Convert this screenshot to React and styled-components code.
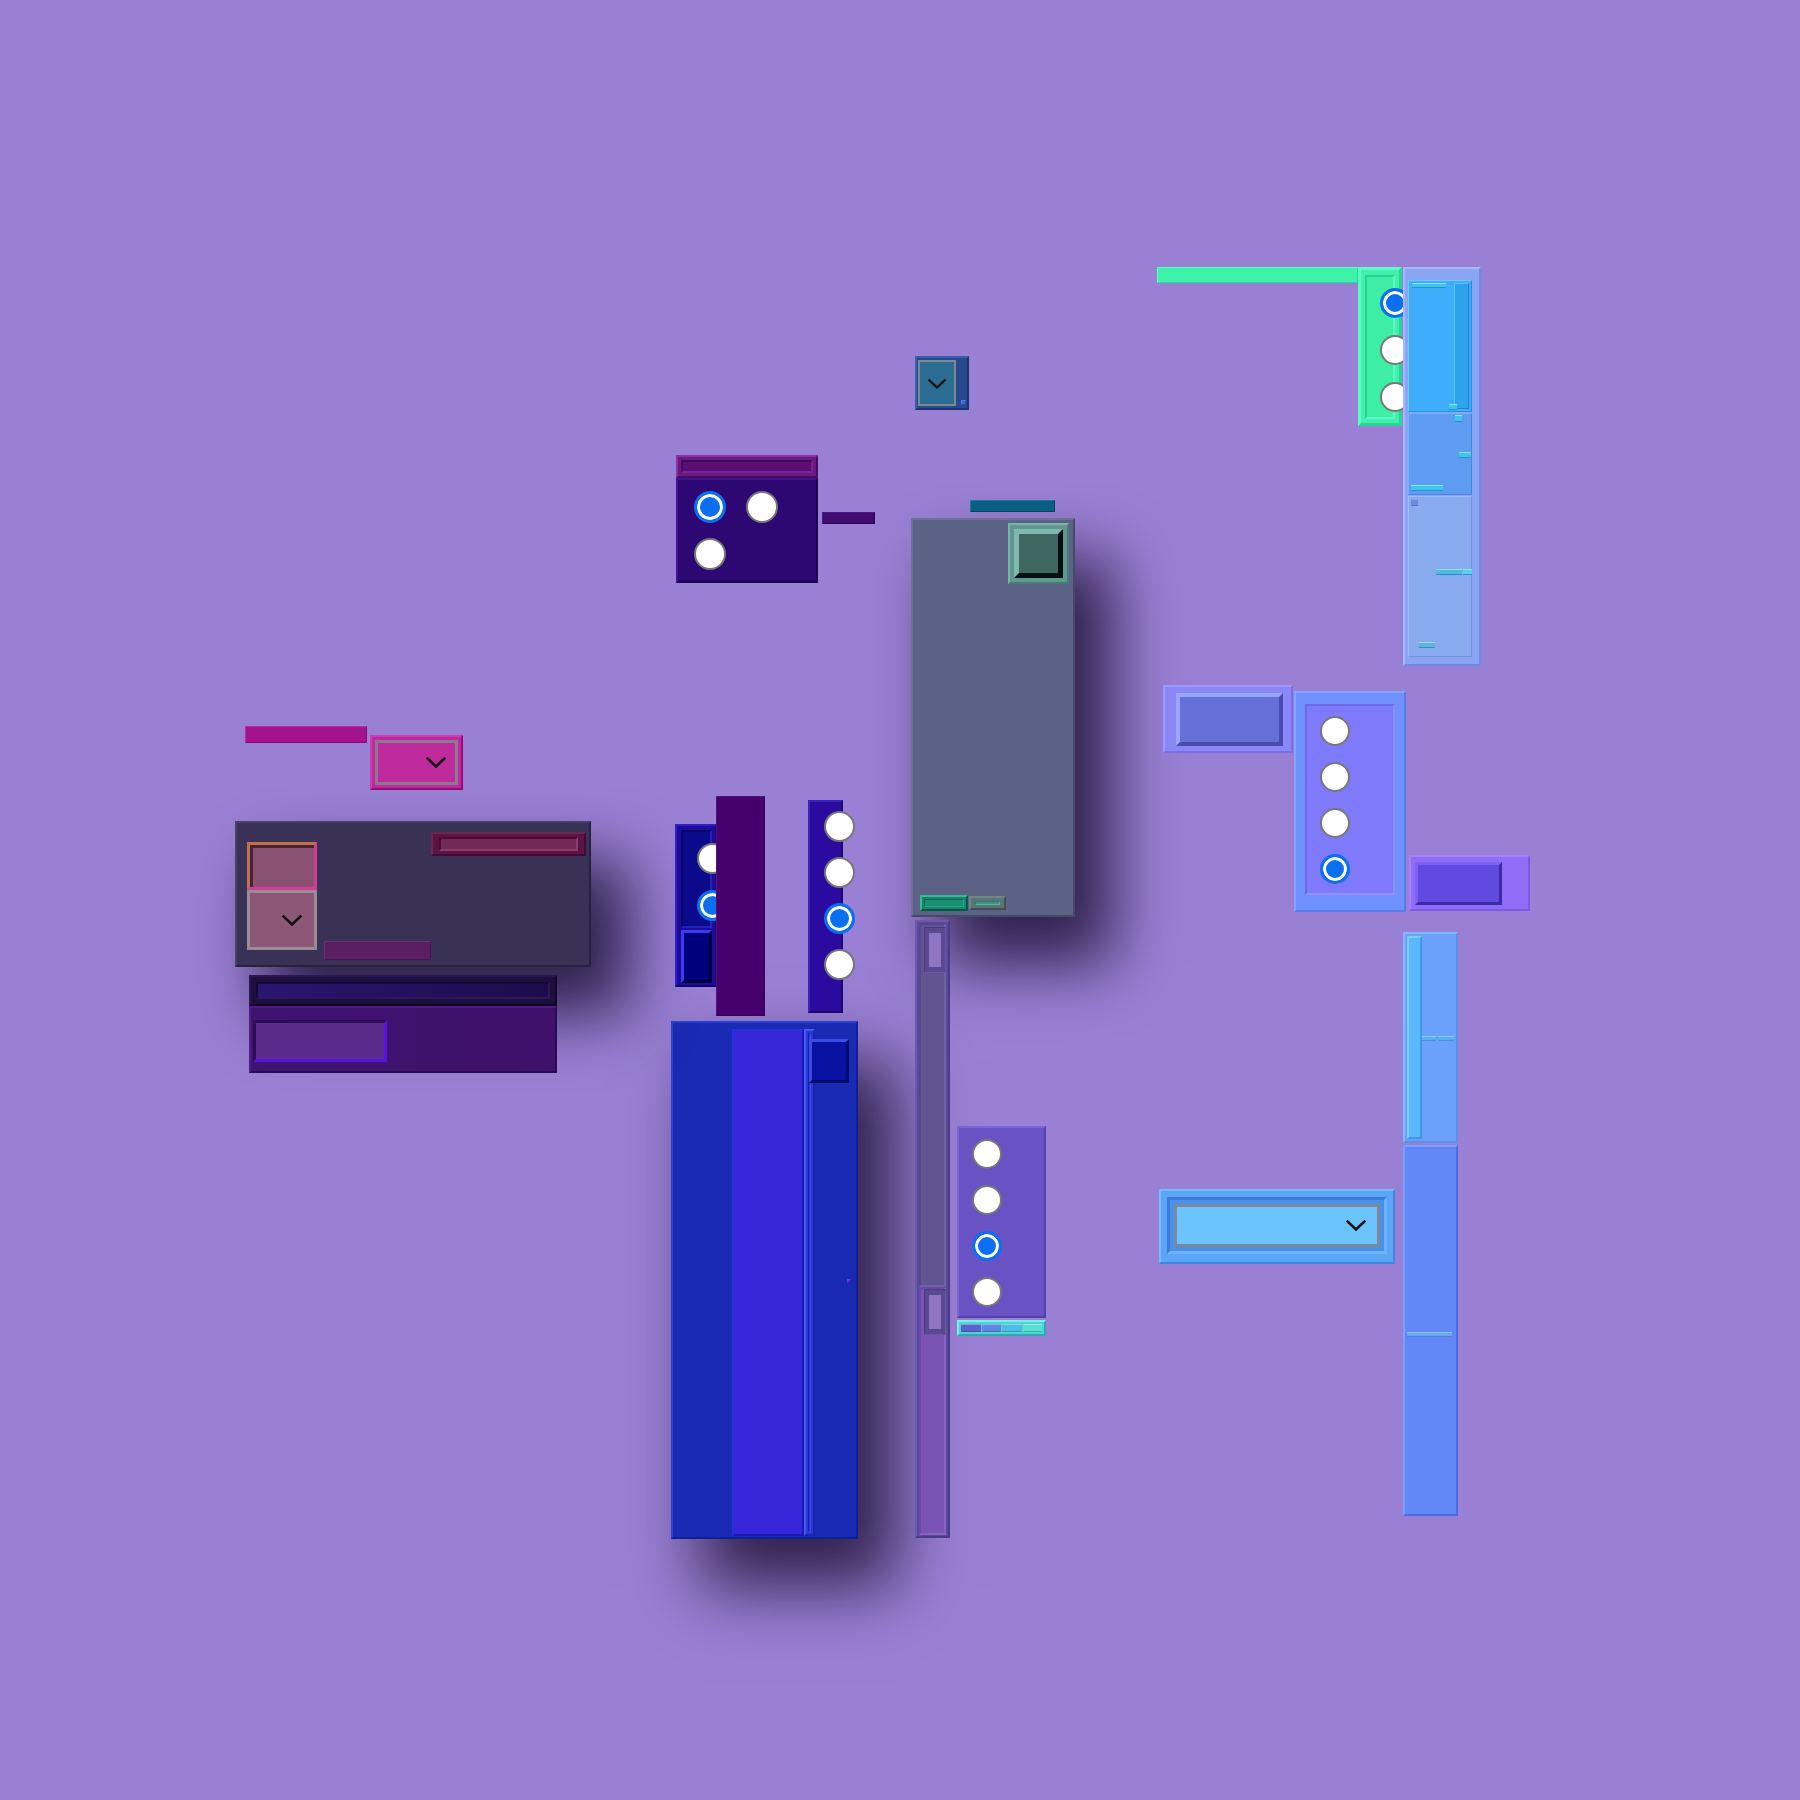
import React from "react";
import styled, { createGlobalStyle, css } from "styled-components";

const GlobalStyle = createGlobalStyle`
  html, body {
    margin: 0;
    padding: 0;
    background: #9a80d4;
  }
  body {
    font-family: "Liberation Sans", Arial, sans-serif;
  }
  * {
    box-sizing: border-box;
  }
`;

const bevel = css`
  border: ${(p) => p.$b ?? 2}px solid;
  border-color: ${(p) => `${p.$hi} ${p.$lo} ${p.$lo} ${p.$hi}`};
`;

const flow = css`
  display: flex;
  flex-direction: ${(p) => p.$dir || "row"};
  padding: ${(p) => p.$pad || 0};
  gap: ${(p) => p.$gap || 0}px;
  justify-content: ${(p) => p.$justify || "flex-start"};
  align-items: ${(p) => p.$align || "stretch"};
`;

const Canvas = styled.div`
  position: relative;
  width: 1800px;
  height: 1800px;
  overflow: hidden;
  background: #9a80d4;
`;

/* widgets sit on the canvas at their own coordinates */
const Bar = styled.div`
  position: absolute;
  left: ${(p) => p.$x}px;
  top: ${(p) => p.$y}px;
  width: ${(p) => p.$w}px;
  height: ${(p) => p.$h}px;
  background: ${(p) => p.$bg};
  ${bevel}
`;

const Panel = styled.div`
  position: absolute;
  left: ${(p) => p.$x}px;
  top: ${(p) => p.$y}px;
  width: ${(p) => p.$w}px;
  height: ${(p) => p.$h}px;
  background: ${(p) => p.$bg || "transparent"};
  ${(p) => (p.$hi ? bevel : "")}
  ${flow}
  box-shadow: ${(p) =>
    p.$shadow ? "34px 44px 64px 4px rgba(24, 12, 46, 0.82)" : "none"};
`;

const Inset = styled.div`
  position: relative;
  ${(p) => (p.$w ? `width: ${p.$w}px; flex-shrink: 0;` : "")}
  ${(p) => (p.$h ? `height: ${p.$h}px; flex-shrink: 0;` : "")}
  ${(p) => (p.$grow ? "flex: 1;" : "")}
  background: ${(p) => p.$bg};
  ${(p) => (p.$hi ? bevel : "")}
  ${flow}
  ${(p) => (p.$sunk ? `box-shadow: inset 3px 3px 0 ${p.$sunk};` : "")}
`;

const Tick = styled.span`
  position: absolute;
  left: ${(p) => p.$x}px;
  top: ${(p) => p.$y}px;
  width: ${(p) => p.$w}px;
  height: ${(p) => p.$h || 5}px;
  background: ${(p) => p.$bg || "#3fc4ea"};
  border-top: 1px solid ${(p) => p.$hi || "#86e8ff"};
  border-bottom: 1px solid ${(p) => p.$lo || "#2494c8"};
`;

const Knob = styled.span`
  position: absolute;
  left: ${(p) => p.$x}px;
  top: ${(p) => p.$y}px;
  width: ${(p) => p.$w}px;
  height: ${(p) => p.$h}px;
  background: ${(p) => p.$bg};
  ${bevel}
`;

const SelectBox = styled.div`
  ${(p) => (p.$grow ? "flex: 1;" : "")}
  ${(p) => (p.$w ? `width: ${p.$w}px; flex-shrink: 0;` : "")}
  ${(p) => (p.$h ? `height: ${p.$h}px; flex-shrink: 0;` : "")}
  display: flex;
  align-items: center;
  justify-content: ${(p) => p.$justify || "flex-end"};
  padding-right: ${(p) => p.$padR ?? 0}px;
  padding-left: ${(p) => p.$padL ?? 0}px;
  background: ${(p) => p.$bg};
  border: ${(p) => p.$b ?? 2}px solid ${(p) => p.$edge || "#7d7d86"};
`;

const RadioGroup = styled.div`
  position: ${(p) => (p.$abs ? "absolute" : "static")};
  left: ${(p) => p.$x ?? 0}px;
  top: ${(p) => p.$y ?? 0}px;
  display: ${(p) => (p.$cols ? "grid" : "flex")};
  flex-direction: column;
  grid-template-columns: ${(p) => (p.$cols ? `repeat(${p.$cols}, max-content)` : "none")};
  row-gap: ${(p) => p.$gap}px;
  column-gap: ${(p) => p.$colGap ?? 0}px;
  padding: ${(p) => p.$pad || 0};
`;

const Radio = styled.span`
  display: block;
  width: ${(p) => p.$size || 30}px;
  height: ${(p) => p.$size || 30}px;
  border-radius: 50%;
  flex-shrink: 0;
  ${(p) =>
    p.$on
      ? css`
          background: #0b6ff2;
          border: 3px solid #0b6ff2;
          box-shadow: inset 0 0 0 3px #ffffff;
        `
      : css`
          background: #ffffff;
          border: 2px solid #777777;
        `}
`;

const Segment = styled.span`
  flex: 1;
  background: ${(p) => p.$bg};
  border-top: 1px solid rgba(255, 255, 255, 0.35);
  border-bottom: 1px solid rgba(0, 0, 0, 0.2);
`;

function Chevron({ w = 22 }) {
  return (
    <svg width={w} height={w * 0.55} viewBox="0 0 20 11" fill="none">
      <path d="M1.5 1.5 L10 9.5 L18.5 1.5" stroke="#111" strokeWidth="2.4" />
    </svg>
  );
}

function Radios({ count, on, size, ...rest }) {
  return (
    <RadioGroup {...rest}>
      {Array.from({ length: count }, (_, i) => (
        <Radio key={i} $on={i === on} $size={size} />
      ))}
    </RadioGroup>
  );
}

export default function App() {
  return (
    <>
      <GlobalStyle />
      <Canvas>
        {/* shadowed cards first so their shadows fall behind the rest */}
        <Panel $x={911} $y={518} $w={164} $h={399} $bg="#5c6285" $hi="#6b7198" $lo="#454a68" $shadow
          $dir="column" $justify="space-between" $pad="3px 4px 4px 7px">
          <Inset $bg="transparent" $justify="flex-end">
            <Inset $w={61} $h={61} $bg="#5e9890" $hi="#7db3ab" $lo="#4a7c75" $pad="4px">
              <Inset $grow $bg="#3f6761" $hi="#80b7af" $lo="#050f0e" $b={5} />
            </Inset>
          </Inset>
          <Inset $bg="transparent" $gap={1} $align="center">
            <Inset $w={48} $h={16} $bg="#17876c" $hi="#38b898" $lo="#0a5644" $b={2} $pad="2px">
              <Inset $grow $bg="#1a8e72" $hi="#0d6450" $lo="#2aa888" $b={1} />
            </Inset>
            <Inset $w={37} $h={14} $bg="#5c7474" $hi="#6e8888" $lo="#444c56" $b={2} $pad="3px 4px">
              <Inset $grow $bg="#3e9888" $hi="#2a7a6c" $lo="#5ab0a0" $b={1} />
            </Inset>
          </Inset>
        </Panel>

        <Panel $x={671} $y={1021} $w={187} $h={518} $bg="#1a2bb3" $hi="#2a40d2" $lo="#0f1e9a" $shadow
          $pad="6px 0 1px 59px">
          <Inset $w={72} $bg="#3626d8" $hi="#2232e0" $lo="#1a1ab4" $b={2} />
          <Inset $w={11} $bg="#2838d4" $hi="#4658f2" $lo="#1a22b0" $b={2} $pad="2px">
            <Inset $grow $bg="#2434d0" $hi="#1a20a8" $lo="#3c4cec" $b={1} />
          </Inset>
          <Knob $x={136} $y={16} $w={40} $h={44} $bg="#0a12a2" $hi="#3a4be6" $lo="#000a6a" $b={3} />
          <Knob $x={174} $y={256} $w={4} $h={4} $bg="#5a2af0" $hi="#6a3aff" $lo="#3a1ab0" $b={1} />
        </Panel>

        <Panel $x={235} $y={821} $w={356} $h={146} $bg="#3a3156" $hi="#4a4068" $lo="#27213c" $shadow
          $pad="9px 3px 5px 10px">
          <Inset $bg="transparent" $dir="column" $w={70} style={{ marginTop: 10 }}>
            <Inset $h={48} $bg="#8a5172" $hi="#c0704e" $lo="#d43c98" $b={3} $sunk="#472435" />
            <SelectBox $h={60} $bg="#8d5778" $edge="#9a8c94" $b={3} $padR={11}>
              <Chevron />
            </SelectBox>
          </Inset>
          <Inset $bg="transparent" $align="flex-end" style={{ marginLeft: 7 }}>
            <Inset $w={107} $h={19} $bg="#5a1f62" $hi="#6c3276" $lo="#4a1452" $b={1} />
          </Inset>
          <Inset $bg="transparent" $align="flex-start">
            <Inset $w={155} $h={24} $bg="#5c1444" $hi="#6e2456" $lo="#420a30" $b={2} $pad="3px 6px">
              <Inset $grow $bg="#74285a" $hi="#4a0c36" $lo="#8c3c70" $b={2} />
            </Inset>
          </Inset>
        </Panel>

        {/* title bar and body under the dark card */}
        <Panel $x={249} $y={975} $w={308} $h={98} $dir="column">
          <Inset $h={31} $bg="#1d0e3e" $hi="#2a1654" $lo="#100628" $b={2} $pad="5px">
            <Inset $grow $bg="linear-gradient(90deg, #2a1672, #1c0c4a)" $hi="#150838" $lo="#2a1a5a" $b={2} />
          </Inset>
          <Inset $grow $bg="linear-gradient(90deg, #3e1470, #3f106c)" $hi="#4c1e84" $lo="#2a0a52" $b={2}
            $pad="12px 2px 9px 2px" $align="flex-start">
            <Inset $w={134} $h={42} $bg="#5b2b8c" $hi="#2a0e52" $lo="#5a12e0" $b={3} />
          </Inset>
        </Panel>

        {/* magenta strip and dropdown */}
        <Bar $x={245} $y={726} $w={122} $h={17} $bg="#a5128f" $hi="#b82ca2" $lo="#860a72" $b={1} />
        <Panel $x={370} $y={735} $w={93} $h={55} $bg="#c1289d" $hi="#cf3cb0" $lo="#940b7a" $pad="3px">
          <SelectBox $grow $bg="#bf2a9c" $edge="#8a7a8e" $b={3} $padR={8}>
            <Chevron />
          </SelectBox>
        </Panel>

        {/* purple radio card */}
        <Panel $x={676} $y={455} $w={142} $h={127} $dir="column">
          <Inset $h={23} $bg="#6a1a82" $hi="#8a30a2" $lo="#4a0a62" $b={2} $pad="3px">
            <Inset $grow $bg="#5a0e74" $hi="#400a5a" $lo="#7a2494" $b={2} />
          </Inset>
          <Inset $grow $bg="#2e0872" $hi="#3c1690" $lo="#1c0450" $b={2} $pad="11px 16px">
            <Radios count={3} on={0} size={32} $cols={2} $gap={15} $colGap={20} />
          </Inset>
        </Panel>
        <Bar $x={822} $y={512} $w={53} $h={12} $bg="#3f0b70" $hi="#4a1680" $lo="#2a0450" $b={1} />
        <Bar $x={970} $y={500} $w={85} $h={12} $bg="#0a5e84" $hi="#177aa2" $lo="#05425e" $b={1} />

        {/* small dropdown */}
        <Panel $x={915} $y={356} $w={54} $h={54} $bg="#284990" $hi="#3a60ac" $lo="#1c346e" $pad="2px 0 2px 1px">
          <SelectBox $w={38} $bg="#2b6d92" $edge="#7b8a8c" $b={2} $justify="center">
            <Chevron w={20} />
          </SelectBox>
          <Knob $x={44} $y={42} $w={5} $h={5} $bg="#3a6ad8" $hi="#4a7ae8" $lo="#2a4ab0" $b={1} />
        </Panel>

        {/* blue radio column behind the purple bar */}
        <Panel $x={675} $y={824} $w={42} $h={163} $bg="#1e0a9e" $hi="#2c22c2" $lo="#0e0466" $dir="column"
          $pad="4px 3px 2px 4px" $gap={2}>
          <Inset $h={98} $bg="#0c0a8c" $hi="#08085e" $lo="#2420b8" $b={2}>
            <Radios count={2} on={1} size={31} $gap={16} $pad="11px 0 0 14px" />
          </Inset>
          <Inset $grow $bg="#00007c" $hi="#3c3cf2" $lo="#00003a" $b={3} />
        </Panel>
        <Bar $x={716} $y={796} $w={49} $h={220} $bg="#46006e" $hi="#55107e" $lo="#38005a" $b={1} />

        <Panel $x={808} $y={800} $w={35} $h={213} $bg="#2b0aa0" $hi="#3a22ba" $lo="#1a066c" $pad="9px 0 0 14px">
          <Radios count={4} on={2} size={31} $gap={15} />
        </Panel>

        {/* stacked slider bar */}
        <Panel $x={915} $y={920} $w={35} $h={618} $bg="#5a4a9c" $hi="#6a5aaf" $lo="#4a3a8a" $dir="column" $pad="1px 2px">
          <Inset $h={364} $bg="#615591" $hi="#54488a" $lo="#6e62a0" $b={2} $pad="2px 3px" $align="flex-start">
            <Inset $w={22} $h={46} $bg="#5a4890" $hi="#4a3a80" $lo="#6a58a0" $b={1} $pad="5px 4px">
              <Inset $grow $bg="#8e76c4" />
            </Inset>
          </Inset>
          <Inset $grow $bg="#7b52b6" $hi="#6a48a6" $lo="#8a62c4" $b={2} $pad="0 3px" $align="flex-start">
            <Inset $w={22} $h={46} $bg="#5a4890" $hi="#4a3a80" $lo="#6a58a0" $b={1} $pad="5px 4px">
              <Inset $grow $bg="#8e76c4" />
            </Inset>
          </Inset>
        </Panel>

        <Panel $x={957} $y={1126} $w={89} $h={192} $bg="#6953c4" $hi="#7a66d2" $lo="#5240a8" $pad="11px 0 0 13px">
          <Radios count={4} on={2} $gap={16} />
        </Panel>
        <Panel $x={957} $y={1320} $w={89} $h={16} $bg="#4fd4d2" $hi="#7af0ea" $lo="#30a8b4" $pad="2px" $gap={1}>
          <Segment $bg="#5a62d0" />
          <Segment $bg="#5e86e6" />
          <Segment $bg="#4cbce6" />
          <Segment $bg="#58e0d2" />
        </Panel>

        {/* mint strip and radio box, top right */}
        <Bar $x={1157} $y={267} $w={201} $h={16} $bg="#3cf4a9" $hi="#5dfcc2" $lo="#2cd897" $b={1} />
        <Panel $x={1358} $y={267} $w={44} $h={159} $bg="#3ff1aa" $hi="#5ffbc5" $lo="#2ad498" $b={3} $pad="5px 4px 4px 4px">
          <Inset $grow $bg="#3eeda6" $hi="#2ccf94" $lo="#62fac6" $b={2} />
          <Radios count={3} on={0} $abs $x={19} $y={18} $gap={17} />
        </Panel>

        <Panel $x={1403} $y={267} $w={78} $h={399} $bg="#89a5f4" $hi="#a3baff" $lo="#6c8ae6"
          $dir="column" $pad="11px 7px 7px 3px" $gap={1}>
          <Inset $h={132} $bg="#3eaefc" $hi="#6ccaff" $lo="#2a8de0" $b={1} $justify="flex-end" $pad="2px">
            <Inset $w={15} $bg="#2fa2ec" $hi="#55c4ff" $lo="#1f7cd0" $b={1} />
            <Tick $x={3} $y={2} $w={34} />
            <Tick $x={40} $y={123} $w={8} $h={6} />
          </Inset>
          <Inset $h={82} $bg="#5e9cf2" $hi="#76b0ff" $lo="#4a86e0" $b={1}>
            <Tick $x={46} $y={1} $w={7} $h={7} />
            <Tick $x={50} $y={38} $w={12} $h={6} />
            <Tick $x={2} $y={71} $w={32} $h={6} />
          </Inset>
          <Inset $grow $bg="#8aaaf0" $hi="#a0bcff" $lo="#7090e0" $b={1}>
            <Tick $x={2} $y={2} $w={7} $h={7} $bg="#6f8ad8" $hi="#8aa0e8" $lo="#5a70c0" />
            <Tick $x={27} $y={72} $w={26} $h={6} $bg="#52b8e0" />
            <Tick $x={54} $y={72} $w={9} $h={6} $bg="#5ad0ee" />
            <Tick $x={10} $y={145} $w={16} $h={6} $bg="#6ab0d8" />
          </Inset>
        </Panel>

        {/* periwinkle controls, middle right */}
        <Panel $x={1163} $y={685} $w={130} $h={68} $bg="#8a87f7" $hi="#9c9aff" $lo="#7670e6" $pad="6px 8px 5px 11px">
          <Inset $grow $bg="#6570d8" $hi="#9ba6ff" $lo="#474cae" $b={4} />
        </Panel>
        <Panel $x={1294} $y={691} $w={112} $h={221} $bg="#6e91fd" $hi="#86a4ff" $lo="#5a7ae6" $pad="11px 9px 15px 9px">
          <Inset $grow $bg="#7f79fb" $hi="#6c68e8" $lo="#948fff" $b={2}>
            <Radios count={4} on={3} $gap={16} $pad="10px 0 0 13px" />
          </Inset>
        </Panel>
        <Panel $x={1409} $y={855} $w={121} $h={56} $bg="#8f6df6" $hi="#a282ff" $lo="#7a5ae2" $pad="5px 26px 4px 4px">
          <Inset $grow $bg="#6249e0" $hi="#7c62f2" $lo="#3b2ba4" $b={3} />
        </Panel>

        {/* tall split column */}
        <Panel $x={1403} $y={932} $w={55} $h={584} $dir="column" $gap={2}>
          <Inset $h={211} $bg="#6ba1fa" $hi="#86b8ff" $lo="#5a90ea" $b={2} $pad="2px">
            <Inset $w={15} $bg="#5ab8fd" $hi="#7fd0ff" $lo="#3e98e6" $b={2} />
            <Tick $x={17} $y={102} $w={14} $bg="#5ab0f8" $hi="#8ad0ff" $lo="#4a90e0" />
            <Tick $x={33} $y={102} $w={16} $bg="#5ab0f8" $hi="#8ad0ff" $lo="#4a90e0" />
          </Inset>
          <Inset $grow $bg="#6287f6" $hi="#78a0ff" $lo="#4a6ce2" $b={2}>
            <Tick $x={2} $y={185} $w={45} $bg="#6aa8f8" $hi="#8cc4ff" $lo="#4e80e4" />
          </Inset>
        </Panel>

        {/* wide sky-blue dropdown */}
        <Panel $x={1159} $y={1189} $w={236} $h={75} $bg="#5ca5f5" $hi="#72bcff" $lo="#3e86e2" $pad="6px 6px 8px 6px">
          <Inset $grow $bg="#4b8fe8" $hi="#3c7ad8" $lo="#6cb4ff" $b={3} $pad="4px">
            <SelectBox $grow $bg="#6bc4fe" $edge="#7a8a9c" $b={3} $padR={10}>
              <Chevron />
            </SelectBox>
          </Inset>
        </Panel>
      </Canvas>
    </>
  );
}
